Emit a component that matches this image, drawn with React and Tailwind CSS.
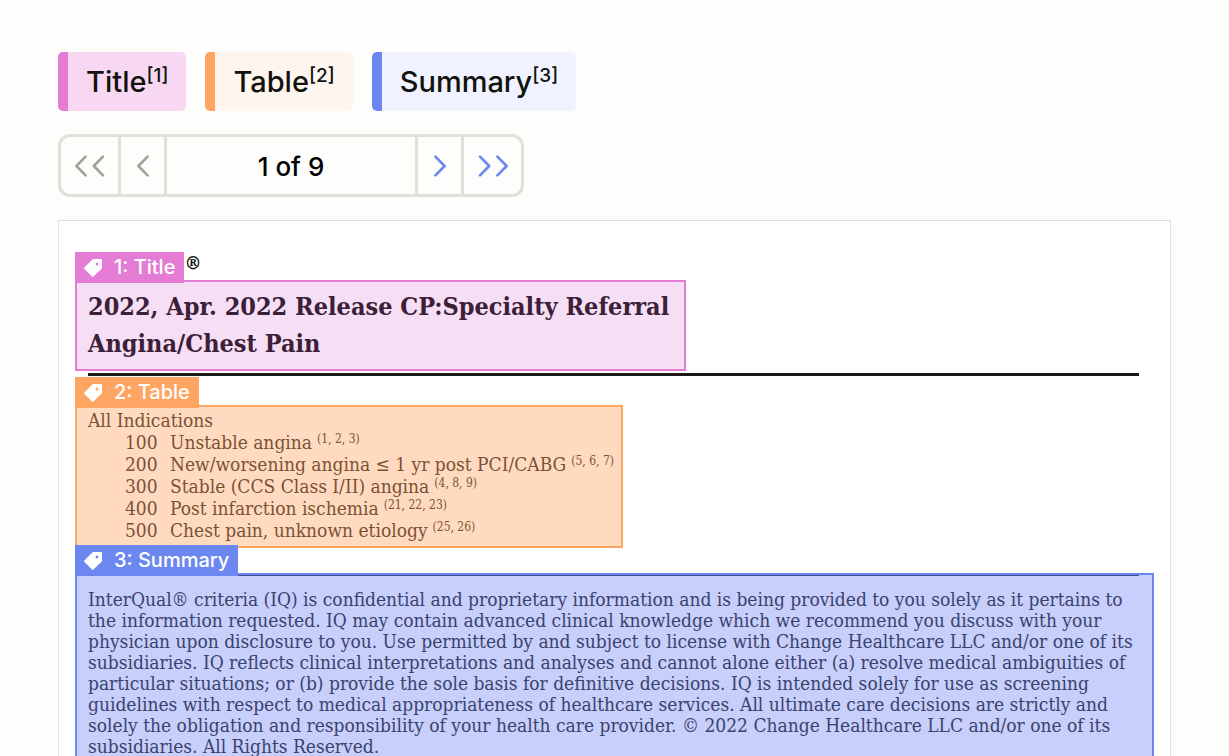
const chips = [
  { label: 'Title', ref: 1, style: 'border-[#e47bd5] bg-[#f7d7f2]' },
  { label: 'Table', ref: 2, style: 'border-[#ffa564] bg-[#fff5ef]' },
  { label: 'Summary', ref: 3, style: 'border-[#6c88f0] bg-[#f0f2ff]' },
];

const indications = [
  ['100', 'Unstable angina', '(1, 2, 3)'],
  ['200', 'New/worsening angina ≤ 1 yr post PCI/CABG', '(5, 6, 7)'],
  ['300', 'Stable (CCS Class I/II) angina', '(4, 8, 9)'],
  ['400', 'Post infarction ischemia', '(21, 22, 23)'],
  ['500', 'Chest pain, unknown etiology', '(25, 26)'],
];

const summary = [
  'InterQual® criteria (IQ) is confidential and proprietary information and is being provided to you solely as it pertains to',
  'the information requested. IQ may contain advanced clinical knowledge which we recommend you discuss with your',
  'physician upon disclosure to you. Use permitted by and subject to license with Change Healthcare LLC and/or one of its',
  'subsidiaries. IQ reflects clinical interpretations and analyses and cannot alone either (a) resolve medical ambiguities of',
  'particular situations; or (b) provide the sole basis for definitive decisions. IQ is intended solely for use as screening',
  'guidelines with respect to medical appropriateness of healthcare services. All ultimate care decisions are strictly and',
  'solely the obligation and responsibility of your health care provider. © 2022 Change Healthcare LLC and/or one of its',
  'subsidiaries. All Rights Reserved.',
];

function Chevrons({ count = 1, flip = false }) {
  const width = count === 2 ? 30 : 12;
  return (
    <svg width={width} height="22" viewBox={`0 0 ${width} 22`} fill="none" stroke="currentColor" strokeWidth="2.6" strokeLinecap="round" strokeLinejoin="round" aria-hidden="true" className={flip ? '-scale-x-100' : ''}>
      <path d="M10.6 1.6 1.4 11l9.2 9.4" />
      {count === 2 && <path d="M28 1.6 18.8 11l9.2 9.4" />}
    </svg>
  );
}

function Tag({ children, color }) {
  return (
    <div className={`relative z-10 -mb-[3px] flex h-[31px] w-fit items-center gap-3 px-[9px] text-[20px] font-medium leading-[31px] text-white ${color}`}>
      <svg width="18" height="18" viewBox="0 0 18 18" fill="currentColor" fillRule="evenodd" aria-hidden="true">
        <path d="M9.5 0H17a1 1 0 0 1 1 1v7.600a1.600 1.600 0 0 1-.5 1.150L9.400 17.600a1 1 0 0 1-1.400 0L.4 10a1 1 0 0 1 0-1.400L8.350.5A1.600 1.600 0 0 1 9.500 0ZM13 3.500a1.500 1.500 0 1 0 0 3 1.500 1.500 0 0 0 0-3Z" />
      </svg>
      <span>{children}</span>
    </div>
  );
}

export default function App() {
  return (
    <main className="h-screen overflow-hidden bg-[#fdfdfb] px-[58px] pt-[52px] font-['Inter',sans-serif] text-[#12120e]">
      <div className="flex gap-[19px]">
        {chips.map((c) => (
          <div key={c.ref} className={`flex h-[59px] rounded-[5px] border-l-[10px] px-[18px] text-[29px] font-medium leading-[60px] ${c.style}`}>
            <span>{c.label}</span>
            <span className="text-[19px] leading-[48px]">[{c.ref}]</span>
          </div>
        ))}
      </div>

      <nav aria-label="Pages" className="mt-[23px] flex h-[63px] w-fit items-stretch rounded-xl border-[3px] border-[#e1dfd6]">
        <button type="button" aria-label="First page" className="flex w-[60px] items-center justify-center border-r-[3px] border-[#e1dfd6] text-[#a5a196]"><Chevrons count={2} /></button>
        <button type="button" aria-label="Previous page" className="flex w-[46px] items-center justify-center border-r-[3px] border-[#e1dfd6] text-[#a5a196]"><Chevrons /></button>
        <span className="flex w-[248px] items-center justify-center pt-[2px] text-[26px] font-medium text-black">1 of 9</span>
        <button type="button" aria-label="Next page" className="flex w-[46px] items-center justify-center border-l-[3px] border-[#e1dfd6] text-[#6c88f0]"><Chevrons flip /></button>
        <button type="button" aria-label="Last page" className="flex w-[60px] items-center justify-center border-l-[3px] border-[#e1dfd6] text-[#6c88f0]"><Chevrons count={2} flip /></button>
      </nav>

      <article className="mt-[23px] min-h-screen border border-[#e1dfd6] bg-white px-4 pt-[31px]">
        <section>
          <div className="flex">
            <Tag color="bg-[#e47bd5]">1: Title</Tag>
            <span className="font-['DejaVu_Serif_Condensed','DejaVu_Serif',serif] text-[19px] font-bold leading-5">®</span>
          </div>
          <h1 className="w-fit min-w-[611px] whitespace-nowrap border-2 border-[#e47bd5] bg-[#f6def4] px-[11px] pb-[7px] pt-[6px] font-['DejaVu_Serif_Condensed','DejaVu_Serif',serif] text-[25px] font-bold leading-[37px] text-[#3c2038]">
            2022, Apr. 2022 Release CP:Specialty Referral<br />Angina/Chest Pain
          </h1>
        </section>

        <hr className="ml-[13px] mr-[15px] mt-[2px] h-[3px] border-0 bg-[#1b191c]" />

        <section className="mt-px">
          <Tag color="bg-[#ffa564]">2: Table</Tag>
          <div className="w-fit min-w-[548px] whitespace-nowrap border-2 border-[#ffa564] bg-[#ffdac0] pb-[5px] pl-[11px] pr-1 pt-[2px] font-['DejaVu_Serif_Condensed','DejaVu_Serif',serif] text-[19px] leading-[22px] text-[#7a5233]">
            <table className="border-collapse">
              <caption className="text-left">All Indications</caption>
              <tbody>
                {indications.map(([code, name, notes]) => (
                  <tr key={code} className="h-[22px]">
                    <th scope="row" className="w-[82px] p-0 pl-[37px] text-left font-normal">{code}</th>
                    <td className="p-0">
                      <div className="flex gap-[5px]">
                        <span>{name}</span>
                        <span className="text-[12px] leading-4">{notes}</span>
                      </div>
                    </td>
                  </tr>
                ))}
              </tbody>
            </table>
          </div>
        </section>

        <section className="-mt-[3px]">
          <Tag color="bg-[#6c88f0]">3: Summary</Tag>
          <div className="border-2 border-[#6c88f0] bg-[#c7cffa]">
            <hr className="mr-[13px] h-px border-0 bg-[#404c8b]" />
            <p className="whitespace-nowrap px-[11px] pb-4 pt-[13px] font-['DejaVu_Serif_Condensed','DejaVu_Serif',serif] text-[19px] leading-[21px] text-[#3a4270]">
              {summary.map((line) => (
                <span key={line} className="block">{line}</span>
              ))}
            </p>
          </div>
        </section>
      </article>
    </main>
  );
}
